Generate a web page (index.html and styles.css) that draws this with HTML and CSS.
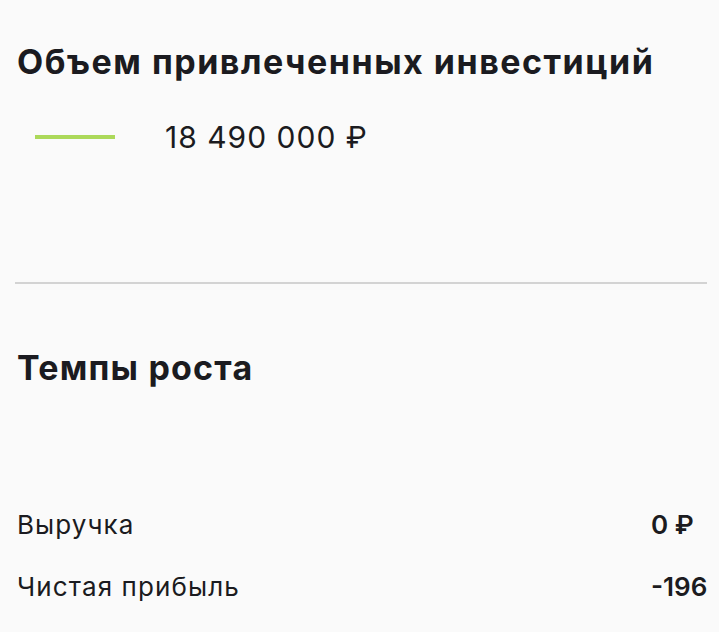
FILE: index.html
```html
<!DOCTYPE html>
<html lang="ru">
<head>
    <meta charset="UTF-8">
    <meta name="viewport" content="width=device-width, initial-scale=1.0">
    <title>Инвестиции</title>
    <link rel="stylesheet" href="styles.css">
</head>
<body>
    <div class="page">
        <section class="block invest">
            <h2 class="block-title">Объем привлеченных инвестиций</h2>
            <div class="legend">
                <span class="legend-line"></span>
                <span class="legend-value">18 490 000 ₽</span>
            </div>
        </section>

        <hr class="divider">

        <section class="block growth">
            <h2 class="block-title">Темпы роста</h2>
            <div class="stats">
                <div class="stat-row">
                    <span class="stat-label">Выручка</span>
                    <span class="stat-value">0 ₽</span>
                </div>
                <div class="stat-row">
                    <span class="stat-label">Чистая прибыль</span>
                    <span class="stat-value">-196 540 ₽</span>
                </div>
            </div>
        </section>
    </div>
</body>
</html>
```

FILE: styles.css
```css
html, body {
    margin: 0;
    padding: 0;
    background: #fafafa;
    color: #1b1b20;
    font-family: 'Inter', 'Noto Sans', sans-serif;
    overflow: hidden;
}

.page {
    width: 692px;
    padding: 0 0 0 15px;
    overflow: hidden;
}

.block-title {
    margin: 0;
    padding-left: 2px;
    font-size: 34px;
    font-weight: 700;
    line-height: 40px;
    letter-spacing: 1.2px;
}

/* Investments */
.invest {
    padding-top: 42px;
    height: 282px;
    box-sizing: border-box;
}

.invest .block-title {
    letter-spacing: 1.5px;
}

.legend {
    display: flex;
    align-items: center;
    margin-top: 37px;
}

.legend-line {
    width: 80px;
    height: 4px;
    margin-left: 20px;
    background: #acd95a;
}

.legend-value {
    margin-left: 50px;
    font-size: 30px;
    font-weight: 400;
    letter-spacing: 1px;
}

.divider {
    margin: 0;
    border: none;
    height: 2px;
    background: #d3d3d3;
}

/* Growth */
.growth {
    padding-top: 64px;
}

.stats {
    margin-top: 121px;
    padding-left: 2px;
}

.stat-row {
    display: grid;
    grid-template-columns: 1fr 56px;
    height: 62px;
    font-size: 26px;
    letter-spacing: 1.1px;
}

.stat-label {
    font-weight: 400;
}

.stat-value {
    font-weight: 600;
    letter-spacing: 0;
    white-space: nowrap;
}
```
